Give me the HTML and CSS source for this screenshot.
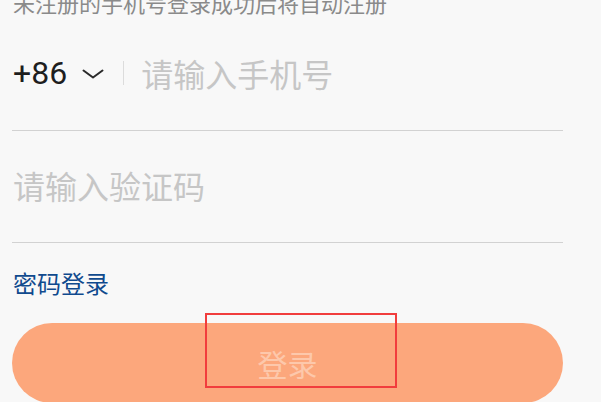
FILE: index.html
```html
<!DOCTYPE html>
<html lang="zh-CN">
<head>
<meta charset="utf-8">
<title>登录</title>
<link rel="stylesheet" href="styles.css">
</head>
<body>
<div class="page">
  <p class="tip">未注册的手机号登录成功后将自动注册</p>
  <div class="field">
    <span class="code">+86</span>
    <svg class="chev" width="22" height="10" viewBox="0 0 22 10"><polyline points="1.5,1.5 11,8.5 20.5,1.5" fill="none" stroke="#2a2a2a" stroke-width="2" stroke-linecap="round" stroke-linejoin="round"/></svg>
    <span class="sep"></span>
    <span class="ph">请输入手机号</span>
  </div>
  <div class="field">
    <span class="ph">请输入验证码</span>
  </div>
  <a class="link">密码登录</a>
  <button class="btn">登录</button>
</div>
<div class="mark"></div>
</body>
</html>
```
FILE: styles.css
```css
html, body {
  margin: 0;
  padding: 0;
  background: #f8f8f8;
  overflow: hidden;
  height: 402px;
}
body {
  font-family: "Noto Sans CJK SC", "Noto Sans", sans-serif;
}
.page {
  display: flex;
  flex-direction: column;
  padding: 0 38px 0 12px;
}
.tip {
  margin: -9px 0 0 1px;
  font-size: 22px;
  line-height: 22px;
  color: #8a8a8a;
  white-space: nowrap;
}
.field {
  display: flex;
  align-items: center;
  height: 108px;
  padding-bottom: 3px;
  border-bottom: 1px solid #d2d2d2;
  padding-left: 1px;
}
.field:first-of-type { margin-top: 6px; }
.code {
  font-family: Roboto, "Noto Sans", sans-serif;
  font-size: 32px;
  color: #1e1e1e;
  line-height: 32px;
}
.chev {
  margin-left: 15px;
  margin-top: 2px;
}
.sep {
  width: 1px;
  height: 24px;
  background: #dcdcdc;
  margin: 0 17px 0 19px;
}
.ph {
  font-size: 32px;
  line-height: 32px;
  color: #c6c6c6;
}
.link {
  margin-top: 28px;
  padding-left: 1px;
  font-size: 24px;
  line-height: 24px;
  color: #104a8e;
}
.btn {
  margin-top: 28px;
  height: 80px;
  border: none;
  border-radius: 40px;
  background: #fca77c;
  color: #fdc8ab;
  font-family: "Noto Sans CJK SC", sans-serif;
  font-size: 30px;
  padding: 0;
}
.mark {
  position: absolute;
  left: 205px;
  top: 313px;
  width: 188px;
  height: 71px;
  border: 2px solid #f13d3d;
}
```
